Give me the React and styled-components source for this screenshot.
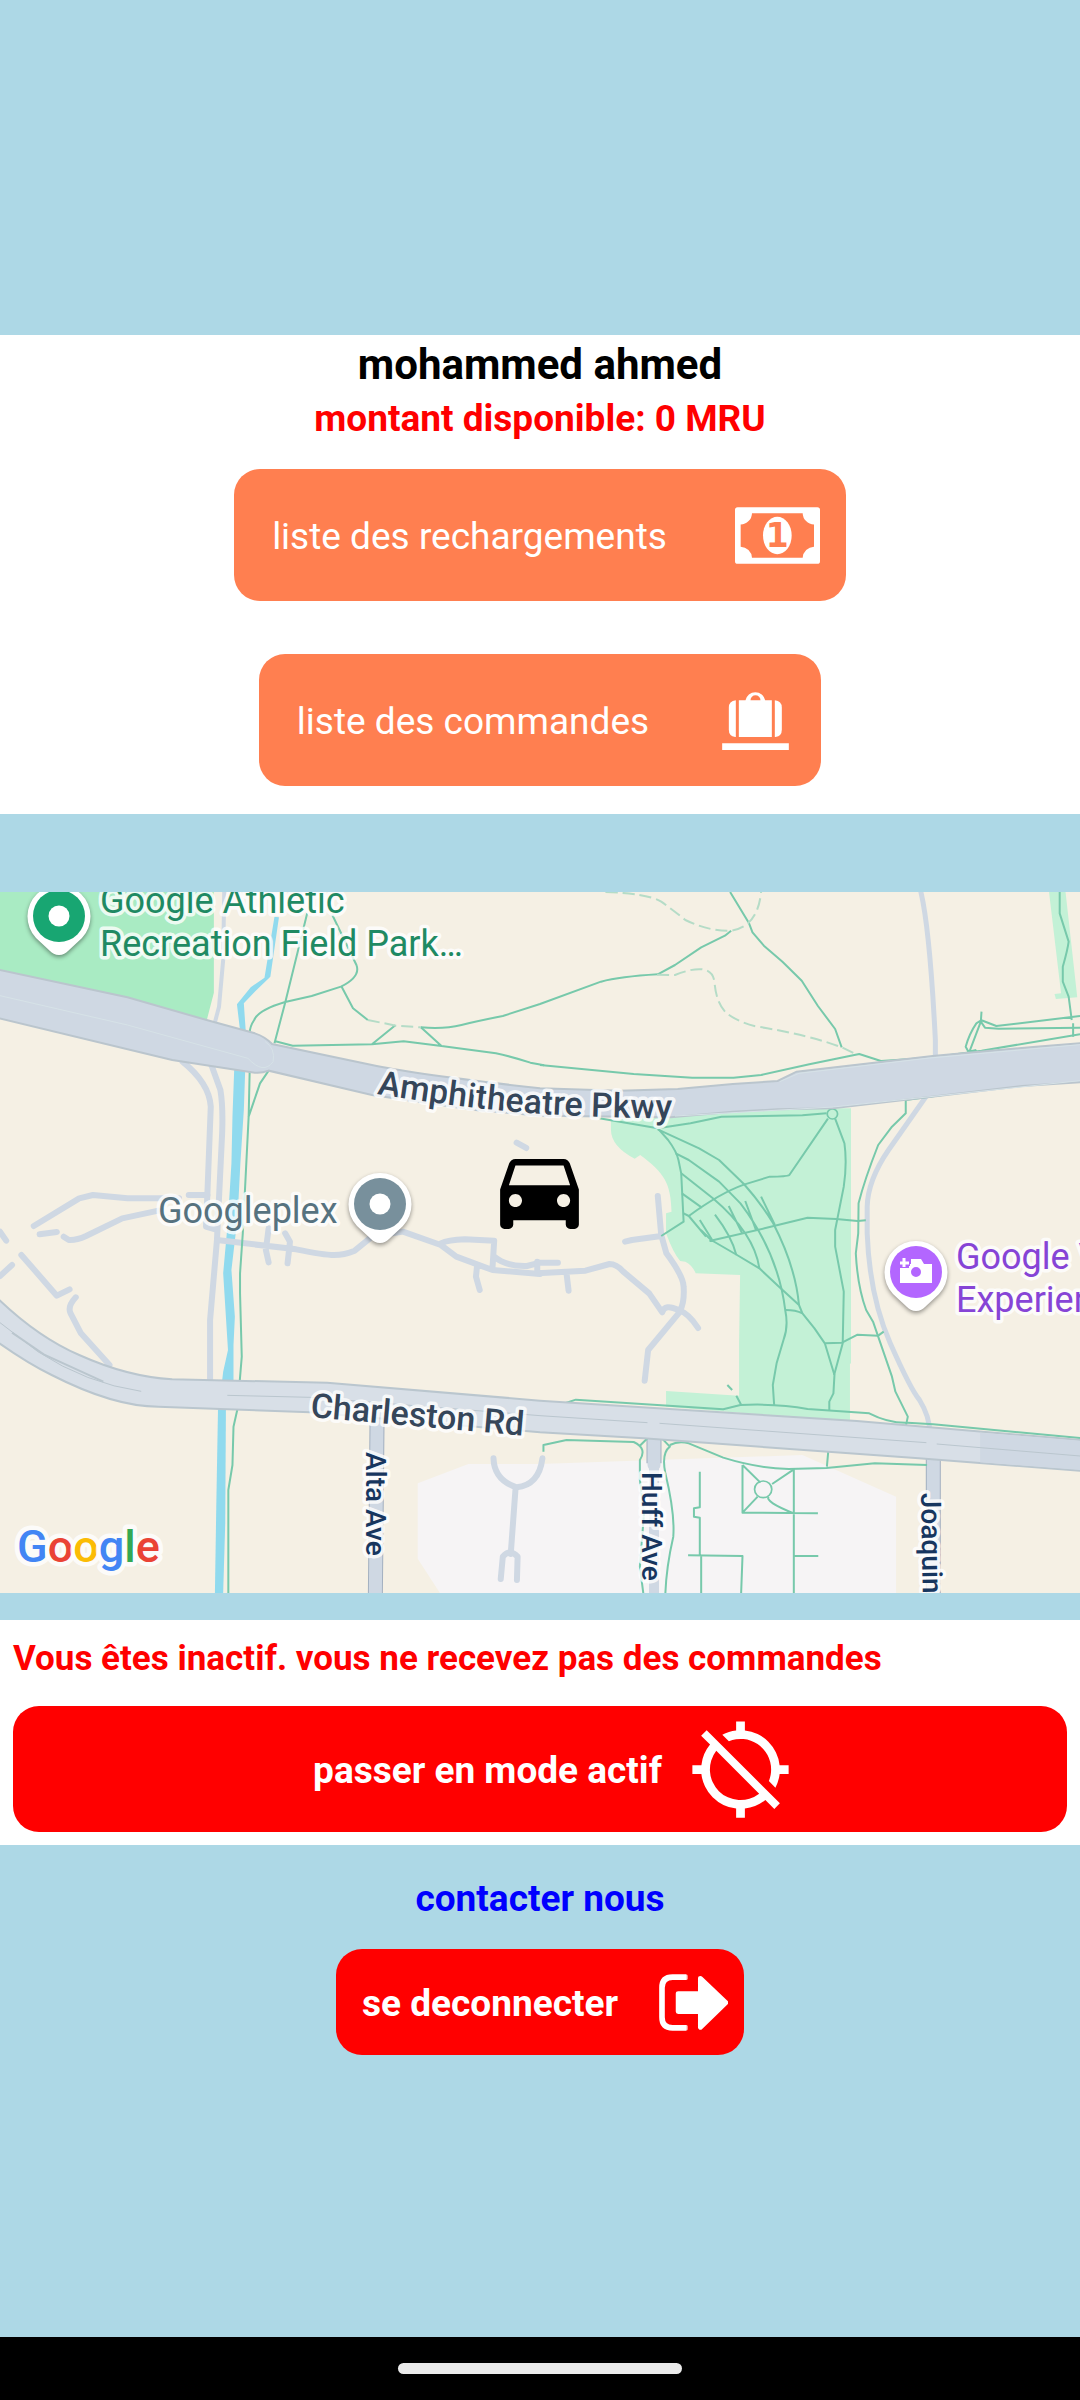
import React, { useState } from 'react';
import styled, { createGlobalStyle } from 'styled-components';
import { MdDirectionsCar, MdLocationDisabled } from 'react-icons/md';

const driver = {
    name: 'mohammed ahmed',
    amount: 0,
};

function MoneyIcon(){
    return (
        <svg width="85" height="57" viewBox="0 0 255 170" aria-hidden="true">
            <path
                fill="#fff"
                fillRule="evenodd"
                d="M8 0H247Q255 0 255 8V162Q255 170 247 170H8Q0 170 0 162V8Q0 0 8 0Z
                   M51 18A35 35 0 0 1 17 52V119A35 35 0 0 1 51 152H203A35 35 0 0 1 237 119V52A35 35 0 0 1 203 18Z"
            />
            <ellipse cx="127" cy="85" rx="43" ry="56" fill="#fff" />
            <text x="127" y="119" textAnchor="middle" fontFamily="DejaVu Sans, sans-serif" fontWeight="700" fontSize="99" fill="#ff7f50">1</text>
        </svg>
    );
}

function LuggageIcon(){
    return (
        <svg width="67" height="60" viewBox="0 0 200 180" fill="#fff" aria-hidden="true">
            <path d="M50 31H70A30 30 0 0 1 129 31H149V141H50ZM85 31H115A15 15 0 0 0 85 31Z" fillRule="evenodd" />
            <path d="M41 31V141H39Q20 138 20 119V53Q20 33 41 31Z" />
            <path d="M158 31V141H160Q179 138 179 119V53Q179 33 158 31Z" />
            <path d="M0 160H200V180H0Z" />
        </svg>
    );
}

function LogoutIcon(){
    return (
        <svg width="69" height="57" viewBox="57 69 208 171" aria-hidden="true">
            <path d="M139 78H98Q66 78 66 110V199Q66 231 98 231H139" fill="none" stroke="#fff" strokeWidth="17" />
            <path d="M139 70q4 0 4 4v9q0 4 -4 4zM139 222q4 0 4 4v9q0 4 -4 4z" fill="#fff" />
            <path d="M115 128H182V82L258 155L182 229V182H115Z" fill="#fff" stroke="#fff" strokeWidth="15" strokeLinejoin="round" />
        </svg>
    );
}

function Pin({ x, y, color, children }){
    return (
        <PinShape transform={`translate(${x} ${y})`}>
            <path d="M0 39C-4 39 -7 37 -9 35L-23 22A31.5 31.5 0 1 1 23 22L9 35C7 37 4 39 0 39Z" fill="#fff" />
            <circle r="26" fill={color} />
            {children || <circle r="10.5" fill="#fff" />}
        </PinShape>
    );
}

function DriverMap(){
    return (
        <MapView viewBox="0 12 1080 701" preserveAspectRatio="xMidYMid slice" role="img" aria-label="carte">
            <g transform="scale(0.34439 0.33333)">
                {/* parks and blocks */}
                <path fill="#a9ebc3" d="M0 0H621V338L600 422L370 355L0 275Z" />
                <path fill="#c3f1d6" d="M1774 720L2100 685H2471V1450L2468 1452V1625L1934 1580V1533L2146 1547V1395L2149 1185L2020 1180Q2010 1155 1990 1145L1975 1143Q1955 1120 1934 1060V1000L1950 995C1948 910 1930 880 1859 825L1843 836Q1775 800 1774 750Z" />
                <path fill="#c3f1d6" d="M3046 36H3094L3128 352L3066 357L3062 342L3081 340Z" />
                <path fill="#f6f4f5" d="M1213 1810L1360 1752L1568 1752L2330 1725L2602 1850V2140H1278L1213 2036Z" />

                {/* canal */}
                <Water d="M797 110L810 112L785 290L742 333L708 370L714 460H698L688 373L728 322L768 293Z" />
                <Water d="M680 570H712L708 690L698 850L690 1010L672 1170L682 1310L678 1395V1502H645L648 1475L662 1410L648 1180L662 1020L672 850L675 710Z" />
                <Water d="M633 1587H656L654 1930L648 2140H624L628 1880Z" />

                {/* service lanes */}
                <Lane $w={4} d="M651 36L648 240L636 380L622 435" />
                <Lane d="M530 545Q608 610 612 680L600 1000L598 1040L630 1050M612 550L640 630Q648 680 645 760L630 1080L610 1320V1502M548 945H603" />
                <Lane d="M98 1038L230 955L270 945L370 955H520M115 1063L165 1056M185 1070L200 1080Q220 1082 250 1068L355 1015L460 992M0 1055L18 1082M35 1155L0 1188M62 1125L165 1247L202 1228M220 1252Q195 1280 205 1300L235 1360L318 1455" />
                <Lane d="M630 1080L860 1108Q940 1125 970 1125T1030 1112L1080 1070L1170 1055L1280 1095L1325 1130L1430 1170L1568 1182M780 1045L772 1110L780 1147M828 1060L842 1085L835 1150M1280 1090Q1300 1080 1350 1078L1435 1082L1430 1165M1435 1130Q1470 1160 1530 1158L1568 1148H1620M1385 1160L1382 1190L1393 1230" />
                <Lane d="M1560 1145V1180L1700 1172L1770 1152Q1790 1152 1810 1175L1885 1240L1923 1297Q1930 1270 1970 1290Q2000 1300 2027 1344M1645 1180L1651 1232M1977 1292L1882 1410L1872 1502M1910 948L1920 1065L1935 1120Q1985 1190 1985 1220Q1988 1265 1975 1292M1815 1085L1835 1080L1920 1068M1500 788L1528 804" />
                <Lane d="M1433 1735Q1435 1800 1500 1822Q1565 1815 1575 1735M1497 1825L1483 2022M1454 2097L1460 2030Q1480 2005 1503 2030L1501 2100" />
                <Lane $w={5} d="M2674 36Q2700 150 2716 480V540M2692 645L2580 810Q2520 900 2518 980V1060Q2525 1250 2585 1390T2670 1560Q2700 1610 2700 1660" />
                <Side $w={15} d="M1095 1600L1090 2140M1899 1670V1750M2710 1720V2140" />
                <Lane $w={13} d="M1095 1600L1090 2140M1899 1670V1755M2710 1700V2140" />
                <Lane $w={10} d="M1899 1755V2140" />

                {/* footpaths */}
                <Trail d="M892 100L828 368L797 490M965 105L1035 255Q1048 290 990 320L905 348L828 366Q750 390 738 420Q725 440 725 460M992 320L1025 385L1068 420M1080 493L1148 436M1222 442L1282 498M797 483L850 497L1080 493L1172 484L1282 498L1440 520Q1480 528 1540 548L1580 556" />
                <Trail d="M1222 442Q1290 448 1340 435T1460 408L1568 372L1745 305Q1800 290 1910 283L1960 255L2036 202L2105 167L2123 152M2120 36L2175 130L2185 157L2218 197L2272 245L2328 302L2375 378L2425 447L2444 502" />
                <Trail d="M1568 555L1840 582L2010 593H2130L2210 585L2350 553L2495 522L2558 543L2700 533L2850 512L3136 463M2850 420L2835 430Q2815 460 2804 500L2812 515L2835 510M2850 395L2848 425L2815 515M2848 420L2893 438L3136 408M2848 425L2860 443L2900 446L3136 443M3077 36V100L3103 185Q3100 210 3086 260V305L3103 350L3112 420" />
                <Trail d="M725 572L722 710L705 1060L697 1180V1240L702 1430L696 1505M780 572L755 610L722 710M690 1585L678 1640L675 1755L663 1830V2140" />
                <Trail d="M1740 715L1910 745L1940 780Q1965 815 1970 840L1978 880L1985 1025L1920 1068M1910 745L2005 730L2095 710L2330 706L2400 700M2404 716L2292 885Q2285 890 2235 890L2160 914Q2090 940 2000 1008M2425 716L2452 790Q2460 850 2450 920L2425 1050V1100L2450 1235L2447 1390L2422 1485" />
                <Trail d="M1910 748L2030 805L2088 840L2160 912Q2210 970 2245 1030Q2310 1160 2320 1275M1962 820L2000 840L2088 905L2150 970Q2260 1120 2280 1290Q2290 1340 2275 1380L2255 1450L2244 1515L2248 1577M1978 880L2070 955Q2190 1060 2205 1165M1980 940L2038 983M1985 1000L2000 1008L2050 1070M2032 1020L2068 1080M2076 1004Q2125 1070 2138 1125M2116 978L2155 1060M2164 963L2195 1050M2210 950L2250 1035" />
                <Trail d="M2035 1050L2065 1080L2140 1125L2205 1165L2262 1220L2320 1275L2330 1300L2365 1345L2395 1390L2423 1485L2420 1540L2408 1565V1590M2060 1083L2220 1045L2345 1013L2428 1017L2490 1023L2514 1021M2282 1290Q2310 1290 2330 1300M2395 1390L2445 1388L2490 1364L2550 1367L2566 1355" />
                <Trail d="M2735 645L2630 660V700L2590 740L2550 795Q2510 900 2493 970L2492 1060L2485 1120Q2490 1220 2515 1290L2535 1325L2590 1490L2600 1535L2636 1610L2630 1640M1643 1569L1672 1559L2100 1588L2150 1575Q2260 1570 2345 1587L2524 1600Q2580 1630 2636 1628L2710 1633L3136 1674" />
                <Trail d="M1578 1715V1695L1645 1680L1840 1686Q1880 1705 1858 1740V1800L1870 1900L1858 2060L1868 2140M1858 1697L1880 1675M1922 1675L1945 1700Q1920 1720 1932 1780Q1960 1900 1955 1970Q1935 2060 1932 2140M1945 1695Q1970 1682 2000 1690L2100 1733Q2200 1765 2290 1767L2400 1764L2540 1750L2692 1755M2405 1714L2401 1760" />
                <Trail d="M2156 1755V1898L2375 1900M2305 1765V2140M2156 1755L2208 1808M2305 1768L2242 1812M2156 1898L2200 1850M2232 1850Q2220 1865 2305 1900M2032 1775V1882L2015 1885V1910L2032 1913V2025M1998 2026L2156 2028L2152 2140M2036 2026V2140M2305 2028H2376" />
                <circle cx="2417" cy="702" r="15" fill="none" stroke="#77c9ab" strokeWidth="5" />
                <circle cx="2216" cy="1828" r="25" fill="none" stroke="#77c9ab" strokeWidth="5" />
                <DashedTrail d="M1068 420L1150 437L1222 442M1758 36Q1880 40 1920 65Q1960 95 1990 120Q2060 155 2123 152Q2200 140 2210 36M1908 284L1960 285Q2070 240 2075 310Q2080 370 2110 400Q2150 430 2200 440Q2350 465 2444 502L2480 520" />
                <Trail d="M2112 1515L2126 1530M2138 1547L2152 1574M3116 430V470" />

                {/* main roads */}
                <Road $fill="#cfd8e3" $edge="#bac5cd" d="M-10 268L370 352L600 420L740 460Q770 470 790 492L1080 555Q1200 582 1568 625L1798 632L1968 627L2128 612L2258 603L2313 575L2708 528L3008 500L3150 489V606L2968 618L2668 655L2418 685L2258 688L2128 695L1948 712L1568 707L1380 690L1080 645L780 572Q760 580 740 578L500 540L-10 413Z" />
                <RoadLine $color="#d6e2e7" d="M0 347L370 435L720 535Q765 585 793 545Q800 505 770 485M2264 605L2320 580L2700 534L3136 494M1960 708L2420 681L3136 602" />
                <Road $fill="#d8dfe7" $edge="#bac6ce" d="M-10 1252Q110 1372 230 1425Q370 1490 500 1498L950 1508L1568 1562L2488 1623L3150 1681V1773L2668 1735L1868 1675L1568 1657L900 1597L640 1587L460 1580Q330 1580 150 1485Q80 1450 -10 1384Z" />
                <path fill="#cfd8e3" d="M2846 1658L3136 1682V1770L2846 1747Z" />
                <RoadLine $color="#bac6ce" d="M0 1328L110 1415Q250 1510 410 1534M660 1546L900 1552L1568 1607L1880 1628M1915 1630L2690 1688M2720 1692L3136 1728" />
                <RoadLine $color="#bac6ce" $w={2} d="M35 1358L130 1425L300 1505" />
            </g>

            <Pin x={59} y={36} color="#18a672" />
            <Pin x={380} y={324} color="#78909c" />
            <Pin x={916} y={392} color="#b366ff">
                <path fill="#fff" fillRule="evenodd" d="M-16 -4H-7V-8H-5V-13H5L8 -8H16V11H-16ZM5 0A5 5 0 1 0 -5 0A5 5 0 1 0 5 0Z" />
                <path stroke="#b366ff" strokeWidth="6" d="M-18 -9H-6M-12 -15V-4" />
                <path stroke="#fff" strokeWidth="3" d="M-16 -9H-7M-12 -14V-5" />
            </Pin>

            <MapLabel x="100" y="33" fill="#1f8a63">Google Athletic</MapLabel>
            <MapLabel x="100" y="76" fill="#1f8a63">Recreation Field Park…</MapLabel>
            <MapLabel x="158" y="343" fill="#56727f">Googleplex</MapLabel>
            <MapLabel x="956" y="389" fill="#8644d6">Google Visitor</MapLabel>
            <MapLabel x="956" y="432" fill="#8644d6">Experience</MapLabel>

            <path id="amphitheatre" fill="none" d="M377 214C430 223 500 232 560 235Q610 238 700 239" />
            <RoadLabel><textPath href="#amphitheatre">Amphitheatre Pkwy</textPath></RoadLabel>
            <RoadLabel transform="translate(310 537) rotate(5)">Charleston Rd</RoadLabel>
            <StreetLabel transform="translate(366 572) rotate(90)">Alta Ave</StreetLabel>
            <StreetLabel transform="translate(642 592) rotate(90)">Huff Ave</StreetLabel>
            <StreetLabel transform="translate(921 613) rotate(89)">Joaquin Rd</StreetLabel>

            <MdDirectionsCar x="487" y="257" size={105} color="#000" />

            <Brand x="17" y="682">
                <tspan fill="#4285f4">G</tspan>
                <tspan fill="#ea4335">o</tspan>
                <tspan fill="#fbbc04">o</tspan>
                <tspan fill="#4285f4">g</tspan>
                <tspan fill="#34a853">l</tspan>
                <tspan fill="#ea4335">e</tspan>
            </Brand>
        </MapView>
    );
}

function App(){
    const [active, setActive] = useState(false);

    return (
        <Screen>
            <GlobalStyle />
            <Content>
                <Account>
                    <Name>{driver.name}</Name>
                    <Amount>montant disponible: {driver.amount} MRU</Amount>
                    <Links>
                        <ListButton type="button">
                            <Label>liste des rechargements</Label>
                            <MoneyIcon />
                        </ListButton>
                        <ListButton type="button">
                            <Label>liste des commandes</Label>
                            <IconSlot><LuggageIcon /></IconSlot>
                        </ListButton>
                    </Links>
                </Account>
                <DriverMap />
                <Status>
                    <StatusText>
                        {active
                            ? 'Vous êtes actif. vous recevez des commandes'
                            : 'Vous êtes inactif. vous ne recevez pas des commandes'}
                    </StatusText>
                    <ModeButton type="button" onClick={() => setActive(!active)}>
                        <Label>{active ? 'passer en mode inactif' : 'passer en mode actif'}</Label>
                        <MdLocationDisabled size={105} />
                    </ModeButton>
                </Status>
                <Contact href="#contact">contacter nous</Contact>
                <LogoutButton type="button">
                    <Label>se deconnecter</Label>
                    <LogoutIcon />
                </LogoutButton>
            </Content>
            <NavBar><Handle /></NavBar>
        </Screen>
    );
}

export default App;

const GlobalStyle = createGlobalStyle`
    * { box-sizing: border-box; }
    body {
        margin: 0;
        background: #add8e6;
        font-family: Roboto, sans-serif;
    }
`;

const Screen = styled.div`
    min-height: 100vh;
    display: flex;
    flex-direction: column;
`;

const Content = styled.main`
    flex: 1;
    display: flex;
    flex-direction: column;
    justify-content: center;
    align-items: center;
    padding-top: 53px;
`;

const Account = styled.section`
    width: 100%;
    display: flex;
    flex-direction: column;
    align-items: center;
    padding: 2px 0 28px;
    margin-bottom: 78px;
    background: #fff;
`;

const Name = styled.h1`
    margin: 0;
    font-size: 42px;
    line-height: 56px;
    color: #000;
`;

const Amount = styled.p`
    margin: 0 0 24px;
    font-size: 37px;
    font-weight: 700;
    line-height: 52px;
    color: red;
`;

const Links = styled.div`
    display: flex;
    flex-direction: column;
    align-items: center;
    gap: 53px;
`;

const Button = styled.button`
    display: flex;
    align-items: center;
    border: 0;
    border-radius: 26px;
    color: #fff;
    background: red;
    font-family: inherit;
    font-size: 37px;
    font-weight: 700;
    line-height: 50px;
    cursor: pointer;
`;

const Label = styled.span`
    padding-top: 4px;
`;

const ListButton = styled(Button)`
    min-height: 132px;
    gap: 68px;
    padding: 0 26px 0 38px;
    background: #ff7f50;
    font-weight: 400;
`;

const IconSlot = styled.i`
    width: 78px;
    display: flex;
    justify-content: center;
    padding-right: 2px;
`;

const Status = styled.section`
    width: 100%;
    padding: 13px;
    margin: 27px 0 28px;
    background: #fff;
`;

const StatusText = styled.p`
    margin: 0 0 21px;
    font-size: 35px;
    font-weight: 700;
    line-height: 52px;
    color: red;
`;

const ModeButton = styled(Button)`
    width: 100%;
    min-height: 126px;
    justify-content: center;
    gap: 26px;
    padding: 0 0 0 26px;
`;

const Contact = styled.a`
    margin-bottom: 24px;
    font-size: 37px;
    font-weight: 700;
    line-height: 52px;
    color: blue;
    text-decoration: none;
`;

const LogoutButton = styled(Button)`
    min-height: 106px;
    gap: 41px;
    padding: 0 16px 0 26px;
`;

const NavBar = styled.footer`
    height: 63px;
    display: flex;
    align-items: center;
    justify-content: center;
    background: #000;
`;

const Handle = styled.div`
    width: 284px;
    height: 11px;
    border-radius: 6px;
    background: #ebebeb;
`;

const MapView = styled.svg`
    display: block;
    width: 100%;
    background: #f5f0e4;
    overflow: hidden;
`;

const Water = styled.path`
    fill: #90daee;
`;

const Lane = styled.path`
    fill: none;
    stroke: #cfd8e3;
    stroke-width: ${({ $w }) => $w || 6}px;
    stroke-linecap: round;
    stroke-linejoin: round;
    vector-effect: non-scaling-stroke;
`;

const Side = styled.path`
    fill: none;
    stroke: #a3b0c0;
    stroke-width: ${({ $w }) => $w}px;
    vector-effect: non-scaling-stroke;
`;

const Trail = styled.path`
    fill: none;
    stroke: #77c9ab;
    stroke-width: 2px;
    stroke-linejoin: round;
    vector-effect: non-scaling-stroke;
`;

const DashedTrail = styled(Trail)`
    stroke: #b5dcc7;
    stroke-dasharray: 12 5;
`;

const Road = styled.path`
    fill: ${({ $fill }) => $fill};
    stroke: ${({ $edge }) => $edge};
    stroke-width: 2px;
    vector-effect: non-scaling-stroke;
`;

const RoadLine = styled.path`
    fill: none;
    stroke: ${({ $color }) => $color};
    stroke-width: ${({ $w }) => $w || 1}px;
    vector-effect: non-scaling-stroke;
`;

const PinShape = styled.g`
    filter: drop-shadow(0 2px 2px rgba(0, 0, 0, 0.4));
`;

const MapLabel = styled.text`
    font-size: 36px;
    paint-order: stroke;
    stroke: rgba(255, 255, 255, 0.8);
    stroke-width: 7px;
    stroke-linejoin: round;
`;

const RoadLabel = styled(MapLabel)`
    font-size: 34px;
    font-weight: 500;
    fill: #35465a;
`;

const StreetLabel = styled(MapLabel)`
    font-size: 28px;
    font-weight: 500;
    fill: #17365f;
`;

const Brand = styled(MapLabel)`
    font-size: 45px;
    font-weight: 500;
    stroke-width: 9px;
`;
